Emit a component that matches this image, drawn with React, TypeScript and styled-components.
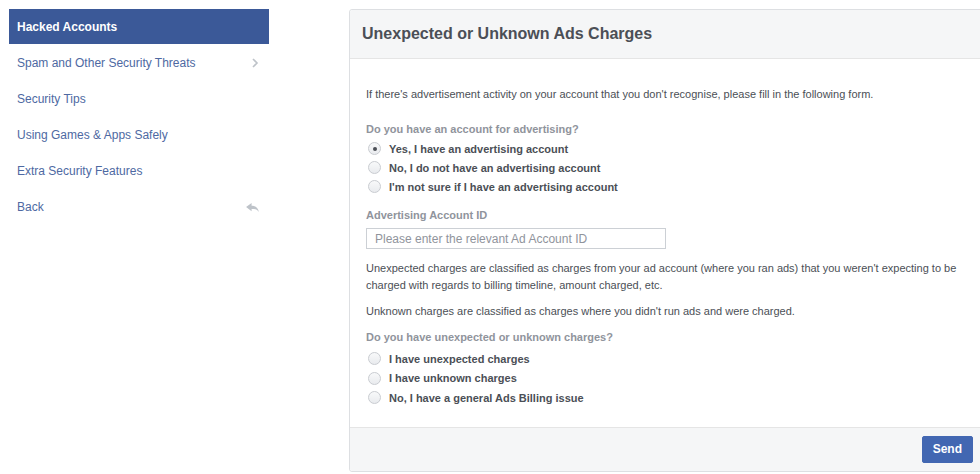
import React, { useState } from "react";
import styled, { createGlobalStyle } from "styled-components";

const GlobalStyle = createGlobalStyle`
  html, body {
    margin: 0;
    padding: 0;
    background: #fff;
    overflow: hidden;
  }
  body {
    font-family: "Liberation Sans", Arial, sans-serif;
    color: #4b4f56;
  }
`;

const Page = styled.div`
  display: flex;
  align-items: flex-start;
  gap: 80px;
  padding: 9px 0 0 9px;
  width: 1100px;
`;

const Sidebar = styled.nav`
  width: 260px;
  display: flex;
  flex-direction: column;
`;

const NavItem = styled.a<{ $active?: boolean }>`
  display: flex;
  align-items: center;
  justify-content: space-between;
  box-sizing: border-box;
  height: ${({ $active }) => ($active ? 35 : 36)}px;
  padding: ${({ $active }) => ($active ? "0 8px" : "2px 8px 0 8px")};
  font-size: 12px;
  text-decoration: none;
  cursor: pointer;
  color: ${({ $active }) => ($active ? "#fff" : "#4e69a2")};
  background: ${({ $active }) => ($active ? "#3b5998" : "transparent")};
  font-weight: ${({ $active }) => ($active ? "bold" : "normal")};
`;

const NavIcon = styled.span`
  display: flex;
  align-items: center;
  color: #bec3c9;
  padding-right: 2px;
`;

const Panel = styled.section`
  width: 632px;
  border: 1px solid #dddfe2;
  border-radius: 3px;
  background: #fff;
`;

const PanelHeader = styled.header`
  height: 48px;
  display: flex;
  align-items: center;
  padding: 0 12px;
  background: #f5f6f7;
  border-bottom: 1px solid #e5e5e5;
  border-radius: 3px 3px 0 0;
`;

const Title = styled.h2`
  margin: 0;
  font-size: 16px;
  font-weight: bold;
  color: #4b4f56;
`;

const PanelBody = styled.div`
  padding: 27px 16px 8px 16px;
  display: flex;
  flex-direction: column;
`;

const Text = styled.p<{ $gap?: number }>`
  margin: 0 0 ${({ $gap }) => $gap ?? 12}px 0;
  font-size: 11px;
  line-height: 17px;
  color: #4b4f56;
`;

const Question = styled.div<{ $gap?: number }>`
  font-size: 11px;
  font-weight: bold;
  color: #90949c;
  line-height: 16px;
  margin-bottom: ${({ $gap }) => $gap ?? 2}px;
`;

const RadioGroup = styled.div`
  display: flex;
  flex-direction: column;
  margin-bottom: 11px;
`;

const RadioRow = styled.label<{ $height?: number }>`
  display: flex;
  align-items: center;
  height: ${({ $height }) => $height ?? 19}px;
  gap: 8px;
  padding-left: 2px;
  font-size: 11px;
  font-weight: bold;
  color: #4b4f56;
  cursor: pointer;
`;

const RadioDot = styled.span<{ $checked?: boolean }>`
  width: 13px;
  height: 13px;
  border-radius: 50%;
  box-sizing: border-box;
  border: 1px solid #c9ccd1;
  background: linear-gradient(#f8f9fa, #e9ebee);
  display: flex;
  align-items: center;
  justify-content: center;
  &::after {
    content: "";
    width: 4px;
    height: 4px;
    border-radius: 50%;
    background: #4b4f56;
    display: ${({ $checked }) => ($checked ? "block" : "none")};
  }
`;

const Input = styled.input`
  width: 300px;
  height: 21px;
  box-sizing: border-box;
  border: 1px solid #ccd0d5;
  padding: 0 8px;
  margin: 3px 0 11px 0;
  font-family: "Liberation Sans", Arial, sans-serif;
  font-size: 12px;
  color: #4b4f56;
  &::placeholder {
    color: #90949c;
  }
`;

const PanelFooter = styled.footer`
  height: 43px;
  display: flex;
  align-items: center;
  justify-content: flex-end;
  padding: 0 9px;
  background: #f5f6f7;
  border-top: 1px solid #e5e5e5;
  border-radius: 0 0 3px 3px;
`;

const Button = styled.button`
  height: 27px;
  padding: 0 10px;
  border: 1px solid #4267b2;
  border-radius: 2px;
  background: #4267b2;
  color: #fff;
  font-family: "Liberation Sans", Arial, sans-serif;
  font-size: 12px;
  font-weight: bold;
  cursor: pointer;
`;

const Chevron = () => (
  <svg width="8" height="12" viewBox="0 0 8 12">
    <path d="M2 2l4 4-4 4" fill="none" stroke="currentColor" strokeWidth="1.6" />
  </svg>
);

const BackArrow = () => (
  <svg width="13" height="11" viewBox="0 0 14 12">
    <path d="M0 5.5L6 1v3c4 0 7 2 8 7-2-3-4-3.5-8-3.5V10z" fill="currentColor" />
  </svg>
);

const navItems = [
  { label: "Hacked Accounts", active: true },
  { label: "Spam and Other Security Threats", icon: <Chevron /> },
  { label: "Security Tips" },
  { label: "Using Games & Apps Safely" },
  { label: "Extra Security Features" },
  { label: "Back", icon: <BackArrow /> },
];

const accountOptions = [
  "Yes, I have an advertising account",
  "No, I do not have an advertising account",
  "I'm not sure if I have an advertising account",
];

const chargeOptions = [
  "I have unexpected charges",
  "I have unknown charges",
  "No, I have a general Ads Billing issue",
];

const App: React.FC = () => {
  const [account, setAccount] = useState(0);
  const [charge, setCharge] = useState(-1);

  return (
    <>
      <GlobalStyle />
      <Page>
        <Sidebar>
          {navItems.map((item) => (
            <NavItem key={item.label} $active={item.active}>
              {item.label}
              {item.icon && <NavIcon>{item.icon}</NavIcon>}
            </NavItem>
          ))}
        </Sidebar>
        <Panel>
          <PanelHeader>
            <Title>Unexpected or Unknown Ads Charges</Title>
          </PanelHeader>
          <PanelBody>
            <Text $gap={18}>
              If there's advertisement activity on your account that you don't recognise, please fill in the following form.
            </Text>
            <Question>Do you have an account for advertising?</Question>
            <RadioGroup>
              {accountOptions.map((opt, i) => (
                <RadioRow key={opt} onClick={() => setAccount(i)}>
                  <RadioDot $checked={account === i} />
                  {opt}
                </RadioRow>
              ))}
            </RadioGroup>
            <Question>Advertising Account ID</Question>
            <Input placeholder="Please enter the relevant Ad Account ID" />
            <Text $gap={9}>
              Unexpected charges are classified as charges from your ad account (where you ran ads) that you weren't expecting to be charged with regards to billing timeline, amount charged, etc.
            </Text>
            <Text $gap={9}>
              Unknown charges are classified as charges where you didn't run ads and were charged.
            </Text>
            <Question $gap={4}>Do you have unexpected or unknown charges?</Question>
            <RadioGroup>
              {chargeOptions.map((opt, i) => (
                <RadioRow key={opt} $height={19.5} onClick={() => setCharge(i)}>
                  <RadioDot $checked={charge === i} />
                  {opt}
                </RadioRow>
              ))}
            </RadioGroup>
          </PanelBody>
          <PanelFooter>
            <Button>Send</Button>
          </PanelFooter>
        </Panel>
      </Page>
    </>
  );
};

export default App;
